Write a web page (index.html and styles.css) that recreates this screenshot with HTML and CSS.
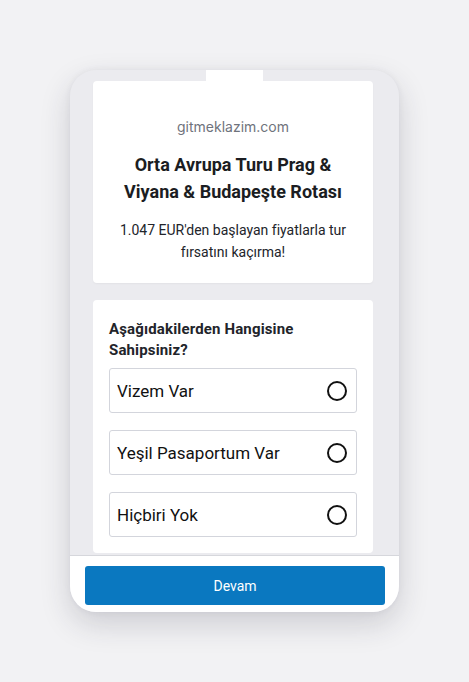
FILE: index.html
```html
<!DOCTYPE html>
<html lang="tr">
<head>
<meta charset="utf-8">
<title>gitmeklazim.com</title>
<link rel="stylesheet" href="styles.css">
</head>
<body>
<div class="phone">
  <div class="content">
    <div class="patch"></div>
    <div class="card intro">
      <div class="site">gitmeklazim.com</div>
      <h1 class="title">Orta Avrupa Turu Prag &amp; Viyana &amp; Budapeşte Rotası</h1>
      <p class="desc">1.047 EUR'den başlayan fiyatlarla tur fırsatını kaçırma!</p>
    </div>
    <div class="card quiz">
      <div class="question">Aşağıdakilerden Hangisine Sahipsiniz?</div>
      <div class="options">
        <div class="option"><span class="label">Vizem Var</span><span class="radio"></span></div>
        <div class="option"><span class="label">Yeşil Pasaportum Var</span><span class="radio"></span></div>
        <div class="option"><span class="label">Hiçbiri Yok</span><span class="radio"></span></div>
      </div>
    </div>
  </div>
  <div class="bar">
    <button class="btn">Devam</button>
  </div>
</div>
</body>
</html>
```
FILE: styles.css
```css
* { box-sizing: border-box; }
html, body { margin: 0; padding: 0; }
body {
  width: 469px;
  height: 682px;
  background: #f2f2f4;
  display: flex;
  align-items: center;
  justify-content: center;
  font-family: Roboto, "Liberation Sans", sans-serif;
  color: #1b1b1f;
}
.phone {
  width: 329px;
  height: 542px;
  border-radius: 26px;
  background: #ebebef;
  overflow: hidden;
  display: flex;
  flex-direction: column;
  box-shadow: 0 12px 30px rgba(40, 40, 60, 0.18), 0 0 6px rgba(40, 40, 60, 0.06);
}
.content {
  flex: 1;
  overflow: hidden;
  padding: 0 26px 0 23px;
  display: flex;
  flex-direction: column;
}
.patch {
  width: 57px;
  height: 11px;
  margin: 0 auto;
  background: #fff;
  flex-shrink: 0;
  position: relative;
  left: 1px;
}
.card {
  background: #fff;
  border-radius: 4px;
  flex-shrink: 0;
}
.intro {
  height: 202px;
  padding: 37px 16px 0;
  text-align: center;
  box-shadow: 0 1px 2px rgba(0,0,0,0.04);
}
.site {
  font-family: Inter, "Noto Sans", sans-serif;
  font-size: 14px;
  line-height: 18px;
  color: #6f737c;
}
.title {
  margin: 15px 0 0;
  font-size: 18px;
  line-height: 27px;
  font-weight: 700;
  color: #1b1d22;
}
.desc {
  margin: 14px 0 0;
  font-size: 14px;
  line-height: 22px;
  color: #22242a;
}
.quiz {
  margin-top: 17px;
  padding: 19px 16px 16px;
}
.question {
  font-size: 15px;
  line-height: 21px;
  font-weight: 700;
  letter-spacing: 0.15px;
  color: #22242a;
  padding-right: 40px;
}
.options {
  margin-top: 7px;
  display: flex;
  flex-direction: column;
  gap: 17px;
}
.option {
  height: 45px;
  border: 1px solid #d3d5dc;
  border-radius: 3px;
  display: flex;
  align-items: center;
  justify-content: space-between;
  padding: 0 9px 0 7px;
}
.label {
  font-size: 17px;
  color: #111;
}
.radio {
  width: 20px;
  height: 20px;
  border: 2px solid #111;
  border-radius: 50%;
}
.bar {
  height: 57px;
  flex-shrink: 0;
  background: #fff;
  border-top: 1px solid #d6d7dc;
  padding: 10px 14px 7px 15px;
}
.btn {
  width: 300px;
  height: 39px;
  border: none;
  border-radius: 3px;
  background: #0a78c0;
  color: #fff;
  font-family: Roboto, "Liberation Sans", sans-serif;
  font-size: 14px;
  font-weight: 400;
  display: block;
}
```
